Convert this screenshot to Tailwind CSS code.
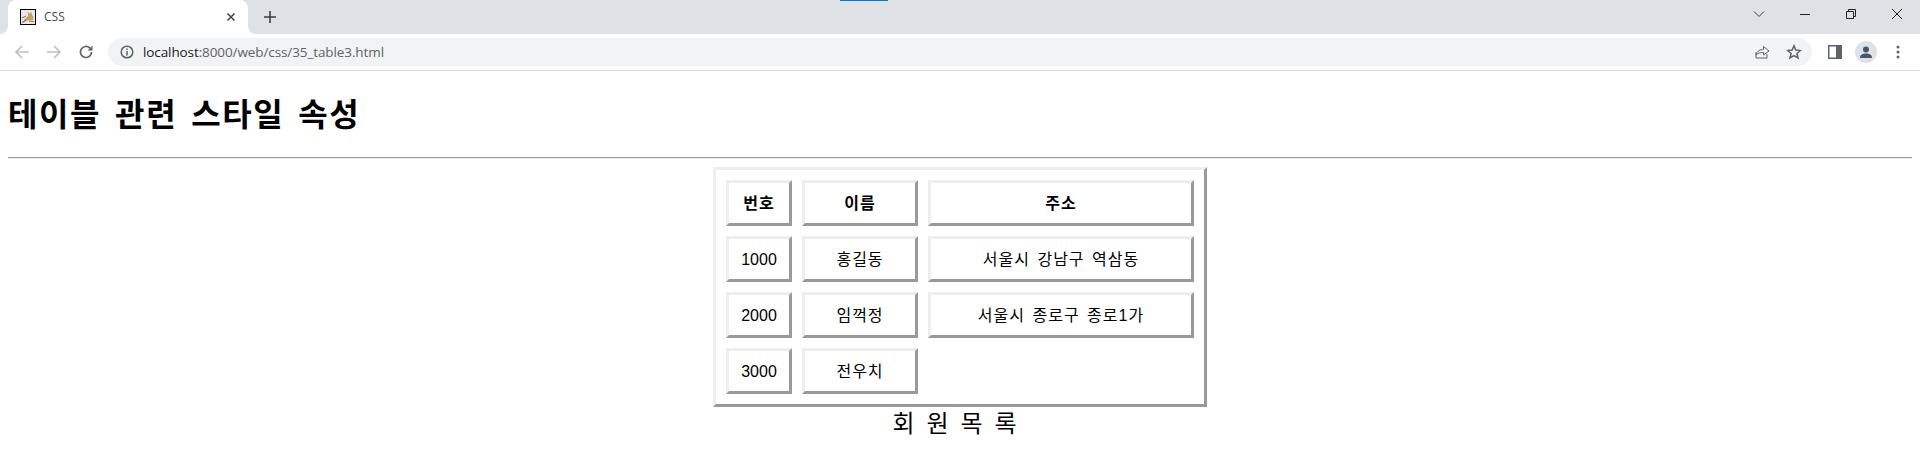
<!DOCTYPE html>
<html lang="ko">
<head>
    <meta charset="UTF-8">
    <title>CSS</title>
    <script src="https://cdn.jsdelivr.net/npm/@tailwindcss/browser@4"></script>
</head>
<body class="bg-white text-black font-['Liberation_Sans','Noto_Sans_CJK_KR',sans-serif] overflow-hidden">
    <!-- browser chrome -->
    <div class="relative h-[34px] bg-[#dee1e6] flex items-start">
        <div class="absolute left-[840px] top-0 w-[48px] h-px bg-[#0078d7]"></div>
        <div class="absolute left-[888px] top-0 w-[192px] h-px bg-[#e3e3e3]"></div>
        <div class="relative ml-2 w-[240px] h-[34px] bg-white rounded-t-lg flex items-center pl-[12px] pr-[12px]">
            <svg class="absolute left-[-8px] bottom-0" width="8" height="8" viewBox="0 0 8 8"><path d="M8 0V8H0A8 8 0 0 0 8 0Z" fill="#fff"/></svg>
            <svg class="absolute right-[-8px] bottom-0" width="8" height="8" viewBox="0 0 8 8"><path d="M0 0V8H8A8 8 0 0 1 0 0Z" fill="#fff"/></svg>
            <svg width="16" height="16" viewBox="0 0 16 16" class="shrink-0">
                <rect x="0.5" y="0.5" width="15" height="15" fill="#e8e8e8" stroke="#000"/>
                <path d="M2 13.5 L5 10 L8 7 L8 5 L7.5 3 L9.5 4.5 L11.5 3 L12 6 L13.5 8 L13 11 L9 11 L6 12 L4 13.5Z" fill="#c9a25a"/>
                <path d="M2 9 L6 7 M2 13.5 L6 11 M9 12 L14 12.5" stroke="#7a6a4a" stroke-width="1" fill="none"/>
            </svg>
            <span class="ml-[8px] text-[12px] text-[#45494e] font-['Open_Sans',sans-serif]">CSS</span>
            <svg class="ml-auto" width="10" height="10" viewBox="0 0 10 10"><path d="M1.5 1.5L8.5 8.5M8.5 1.5L1.5 8.5" stroke="#45494e" stroke-width="1.6" fill="none"/></svg>
        </div>
        <svg class="ml-[15px] mt-[10px]" width="14" height="14" viewBox="0 0 14 14"><path d="M7 1V13M1 7H13" stroke="#3c4043" stroke-width="1.6" fill="none"/></svg>
        <div class="ml-auto flex items-center h-[28px]">
            <svg class="mr-[34px]" width="12" height="12" viewBox="0 0 12 12"><path d="M1 3.5L6 8.5L11 3.5" stroke="#3c4043" stroke-width="1" fill="none"/></svg>
            <svg class="mr-[34px]" width="12" height="12" viewBox="0 0 12 12"><path d="M1 6.5H11" stroke="#222" stroke-width="1" fill="none"/></svg>
            <svg class="mr-[34px]" width="12" height="12" viewBox="0 0 12 12"><path d="M3.5 3V1.5H10.5V8.5H9M1.5 3.5H8.5V10.5H1.5Z" stroke="#222" stroke-width="1" fill="none"/></svg>
            <svg class="mr-[17px]" width="12" height="12" viewBox="0 0 12 12"><path d="M1 1L11 11M11 1L1 11" stroke="#222" stroke-width="1" fill="none"/></svg>
        </div>
    </div>
    <div class="h-[37px] bg-white border-b border-[#dadce0] flex items-center">
        <svg class="ml-[14px]" width="16" height="16" viewBox="0 0 16 16"><path d="M15 8H2M8 2L2 8L8 14" stroke="#bdc1c6" stroke-width="1.7" fill="none"/></svg>
        <svg class="ml-[16px]" width="16" height="16" viewBox="0 0 16 16"><path d="M1 8H14M8 2L14 8L8 14" stroke="#bdc1c6" stroke-width="1.7" fill="none"/></svg>
        <svg class="ml-[16px]" width="16" height="16" viewBox="0 0 16 16"><path d="M13.5 8A5.5 5.5 0 1 1 11.9 4.1" stroke="#5f6368" stroke-width="1.7" fill="none"/><path d="M14.5 1.5V6.5H9.5Z" fill="#5f6368"/></svg>
        <div class="ml-[14px] w-[1704px] h-[28px] rounded-full bg-[#f1f3f4] flex items-center pl-[12px] pr-[10px]">
            <svg width="14" height="14" viewBox="0 0 14 14"><circle cx="7" cy="7" r="5.8" stroke="#5f6368" stroke-width="1.5" fill="none"/><path d="M7 6V10.5M7 3.5V5" stroke="#5f6368" stroke-width="1.5" fill="none"/></svg>
            <span class="ml-[9px] text-[13.5px] text-[#202124] font-['Open_Sans',sans-serif] tracking-[-0.1px]">localhost<span class="text-[#5f6368]">:8000/web/css/35_table3.html</span></span>
            <svg class="ml-auto" width="16" height="16" viewBox="0 0 16 16"><path d="M2 8V14H13V10M2 11C3 7 6 5.5 9.5 5.5V2.5L15 7L9.5 11V8.5C6.5 8.5 4 9 2 11Z" stroke="#5f6368" stroke-width="1" fill="none"/></svg>
            <svg class="ml-[16px]" width="16" height="16" viewBox="0 0 16 16"><path d="M8 1.8L9.8 6.1L14.4 6.5L10.9 9.5L12 14L8 11.6L4 14L5.1 9.5L1.6 6.5L6.2 6.1Z" stroke="#5f6368" stroke-width="1.5" fill="none"/></svg>
        </div>
        <svg class="ml-[16px]" width="14" height="14" viewBox="0 0 14 14"><rect x="0.75" y="0.75" width="12.5" height="12.5" fill="#fff" stroke="#5f6368" stroke-width="1.5"/><rect x="8" y="1" width="5" height="12" fill="#5f6368"/></svg>
        <div class="ml-[13px] w-[22px] h-[22px] rounded-full bg-[#dee1e6] flex items-center justify-center">
            <svg width="14" height="14" viewBox="0 0 14 14"><circle cx="7" cy="4.5" r="3" fill="#4a5568"/><path d="M1 13C1 9.5 4 8.5 7 8.5S13 9.5 13 13Z" fill="#4a5568"/></svg>
        </div>
        <svg class="ml-[19px]" width="4" height="14" viewBox="0 0 4 14"><circle cx="2" cy="2" r="1.5" fill="#5f6368"/><circle cx="2" cy="7" r="1.5" fill="#5f6368"/><circle cx="2" cy="12" r="1.5" fill="#5f6368"/></svg>
    </div>

    <!-- page -->
    <div class="px-2">
        <h1 class="text-[32px] font-bold mt-[26px] mb-[23px] leading-[37px] tracking-[1.6px] [word-spacing:3.5px]">테이블 관련 스타일 속성</h1>
        <hr class="border-0 border-t border-b border-t-[#9a9a9a] border-b-[#eee] mb-[8px]">
        <table class="mx-auto w-[494px] border-separate border-spacing-[10px] border-[3px] border-t-[#eee] border-l-[#eee] border-r-[#999] border-b-[#999] text-[16px] caption-bottom">
            <caption class="text-[24px] leading-[34px] tracking-[1px] [word-spacing:3.3px] pr-[10px]">회 원 목 록</caption>
            <tbody>
                <tr class="h-[46px]">
                    <th class="w-[66px] pt-px border-[3px] border-t-[#eee] border-l-[#eee] border-r-[#999] border-b-[#999] text-center tracking-[1px]">번호</th>
                    <th class="w-[116px] pt-px border-[3px] border-t-[#eee] border-l-[#eee] border-r-[#999] border-b-[#999] text-center tracking-[1px]">이름</th>
                    <th class="w-[266px] pt-px border-[3px] border-t-[#eee] border-l-[#eee] border-r-[#999] border-b-[#999] text-center tracking-[1px]">주소</th>
                </tr>
                <tr class="h-[46px]">
                    <td class="pt-px border-[3px] border-t-[#eee] border-l-[#eee] border-r-[#999] border-b-[#999] text-center">1000</td>
                    <td class="pt-px border-[3px] border-t-[#eee] border-l-[#eee] border-r-[#999] border-b-[#999] text-center tracking-[1px]">홍길동</td>
                    <td class="pt-px border-[3px] border-t-[#eee] border-l-[#eee] border-r-[#999] border-b-[#999] text-center tracking-[1px] [word-spacing:2px]">서울시 강남구 역삼동</td>
                </tr>
                <tr class="h-[46px]">
                    <td class="pt-px border-[3px] border-t-[#eee] border-l-[#eee] border-r-[#999] border-b-[#999] text-center">2000</td>
                    <td class="pt-px border-[3px] border-t-[#eee] border-l-[#eee] border-r-[#999] border-b-[#999] text-center tracking-[1px]">임꺽정</td>
                    <td class="pt-px border-[3px] border-t-[#eee] border-l-[#eee] border-r-[#999] border-b-[#999] text-center tracking-[1px] [word-spacing:2px]">서울시 종로구 종로1가</td>
                </tr>
                <tr class="h-[46px]">
                    <td class="pt-px border-[3px] border-t-[#eee] border-l-[#eee] border-r-[#999] border-b-[#999] text-center">3000</td>
                    <td class="pt-px border-[3px] border-t-[#eee] border-l-[#eee] border-r-[#999] border-b-[#999] text-center tracking-[1px]">전우치</td>
                    <td></td>
                </tr>
            </tbody>
        </table>
    </div>
</body>
</html>
